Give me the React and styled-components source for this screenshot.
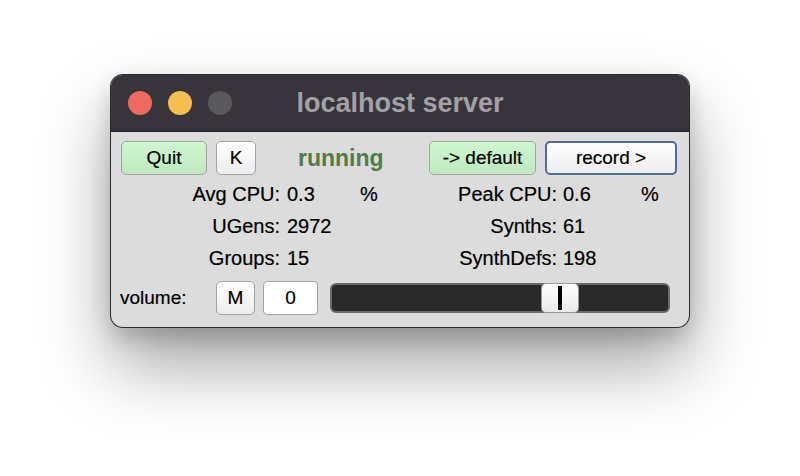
import React from "react";
import styled, { createGlobalStyle } from "styled-components";

const GlobalStyle = createGlobalStyle`
	html, body {
		margin: 0;
		padding: 0;
		background: #ffffff;
	}
	body {
		font-family: "Liberation Sans", Arial, Helvetica, sans-serif;
	}
`;

const Page = styled.div`
	width: 800px;
	height: 476px;
	display: flex;
	justify-content: center;
	align-items: flex-start;
	padding-top: 75px;
	box-sizing: border-box;
	overflow: hidden;
`;

const Window = styled.div`
	width: 578px;
	border-radius: 12px;
	overflow: hidden;
	background: #dcdcdc;
	box-shadow: 0 0 0 1px #2c2b2e, 0 38px 70px rgba(0, 0, 0, 0.36),
		0 10px 22px rgba(0, 0, 0, 0.18);
	display: flex;
	flex-direction: column;
`;

const TitleBar = styled.div`
	height: 57px;
	background: #37353b;
	border-bottom: 1px solid #1f1e21;
	box-sizing: border-box;
	display: grid;
	grid-template-columns: 1fr auto 1fr;
	align-items: center;
	padding: 0 17px;
`;

const Lights = styled.div`
	display: flex;
	gap: 16px;
`;

const Light = styled.span`
	width: 24px;
	height: 24px;
	border-radius: 50%;
	background: ${p => p.color};
`;

const Title = styled.div`
	color: #a3a0a6;
	font-weight: bold;
	font-size: 27px;
`;

const Body = styled.div`
	padding: 9px 12px 12px 9px;
	display: flex;
	flex-direction: column;
	color: #000;
	-webkit-text-stroke: 0.2px #000;
`;

const TopRow = styled.div`
	display: flex;
	align-items: center;
	height: 34px;
`;

const Button = styled.button`
	height: 34px;
	width: ${p => p.w}px;
	box-sizing: border-box;
	border-radius: 5px;
	border: ${p => (p.focus ? "2px solid #4d6e99" : "1.5px solid #a2a2a2")};
	background: ${p =>
		p.green
			? "linear-gradient(#d0f8d0, #bfe8bf)"
			: "linear-gradient(#ffffff, #ececec)"};
	font-family: "Liberation Sans", Arial, sans-serif;
	font-size: 19px;
	color: #000;
	-webkit-text-stroke: 0.2px #000;
	padding: 0;
	margin-left: ${p => p.ml || 0}px;
	display: flex;
	align-items: center;
	justify-content: center;
`;

const Status = styled.span`
	color: #4e7d4c;
	-webkit-text-stroke: 0;
	font-weight: bold;
	font-size: 23px;
	margin-left: 42px;
	margin-right: auto;
`;

const Stats = styled.div`
	margin-top: 3px;
	display: grid;
	grid-template-columns: 160px 80px 40px 157px 84px auto;
	grid-auto-rows: 32px;
	align-items: center;
	font-size: 20px;
`;

const Label = styled.span`
	text-align: right;
	white-space: nowrap;
`;

const Value = styled.span`
	padding-left: ${p => p.pl || 7}px;
`;

const VolumeRow = styled.div`
	margin-top: 7px;
	display: flex;
	align-items: center;
	height: 34px;
`;

const VolumeLabel = styled.span`
	font-size: 19px;
	flex: 0 0 96px;
	box-sizing: border-box;
`;

const NumberBox = styled.div`
	width: 55px;
	height: 34px;
	box-sizing: border-box;
	margin-left: 8px;
	background: #ffffff;
	border: 1.5px solid #a2a2a2;
	border-radius: 4px;
	font-size: 19px;
	display: flex;
	align-items: center;
	justify-content: center;
`;

const Track = styled.div`
	position: relative;
	flex: 1;
	height: 30px;
	margin-left: 12px;
	margin-right: 7px;
	box-sizing: border-box;
	background: #2a2a2a;
	border: 2px solid #6a6a6a;
	border-radius: 6px;
`;

const Knob = styled.div`
	position: absolute;
	top: -2px;
	width: 38px;
	height: 30px;
	box-sizing: border-box;
	border-radius: 5px;
	border: 1px solid #9a9a9a;
	background: linear-gradient(#ffffff, #e9e9e9);
	display: flex;
	align-items: center;
	justify-content: center;

	&::after {
		content: "";
		width: 4px;
		height: 24px;
		background: #000;
	}
`;

const volume = 0.68;

export default function App() {
	return (
		<>
			<GlobalStyle />
			<Page>
				<Window>
					<TitleBar>
						<Lights>
							<Light color="#ee6a5f" />
							<Light color="#f5bf4f" />
							<Light color="#5a585d" />
						</Lights>
						<Title>localhost server</Title>
						<span />
					</TitleBar>
					<Body>
						<TopRow>
							<Button green w={86} ml={1}>
								Quit
							</Button>
							<Button w={40} ml={9}>
								K
							</Button>
							<Status>running</Status>
							<Button green w={107}>
								-&gt; default
							</Button>
							<Button focus w={132} ml={9}>
								record &gt;
							</Button>
						</TopRow>
						<Stats>
							<Label>Avg CPU:</Label>
							<Value>0.3</Value>
							<span>%</span>
							<Label>Peak CPU:</Label>
							<Value pl={6}>0.6</Value>
							<span>%</span>

							<Label>UGens:</Label>
							<Value>2972</Value>
							<span />
							<Label>Synths:</Label>
							<Value pl={6}>61</Value>
							<span />

							<Label>Groups:</Label>
							<Value>15</Value>
							<span />
							<Label>SynthDefs:</Label>
							<Value pl={6}>198</Value>
							<span />
						</Stats>
						<VolumeRow>
							<VolumeLabel>volume:</VolumeLabel>
							<Button w={39}>M</Button>
							<NumberBox>0</NumberBox>
							<Track>
								<Knob style={{ left: `calc(${volume * 100}% - 19px)` }} />
							</Track>
						</VolumeRow>
					</Body>
				</Window>
			</Page>
		</>
	);
}
